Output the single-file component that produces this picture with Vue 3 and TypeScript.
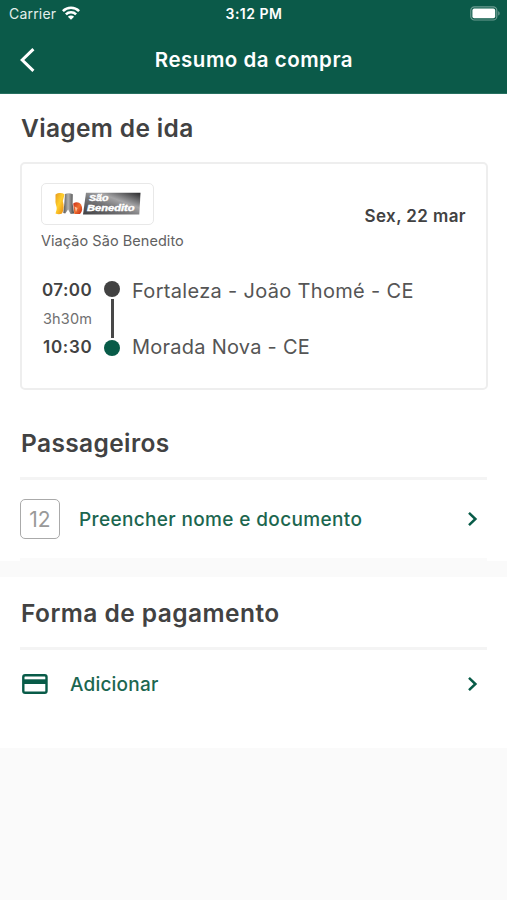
<script setup lang="ts">
interface Stop {
  time: string
  place: string
}

const departure: Stop = { time: '07:00', place: 'Fortaleza - João Thomé - CE' }
const arrival: Stop = { time: '10:30', place: 'Morada Nova - CE' }
const duration = '3h30m'
const seat = 12
</script>

<template>
  <div class="screen">
    <header class="header">
      <div class="status">
        <div class="carrier">
          <span>Carrier</span>
          <svg class="wifi" width="18" height="14" viewBox="0 0 18 14">
            <g fill="none" stroke="#fff" stroke-width="2.6">
              <path d="M0.9 5.1a11.6 11.6 0 0 1 16.2 0" />
              <path d="M3.9 8.4a7.3 7.3 0 0 1 10.2 0" />
            </g>
            <path d="M9 13.8L5.9 10.7a4.3 4.3 0 0 1 6.2 0z" fill="#fff" />
          </svg>
        </div>
        <span class="clock">3:12 PM</span>
        <svg class="battery" width="30" height="15" viewBox="0 0 30 15">
          <rect x="0.8" y="0.8" width="26" height="13.2" rx="3.6" fill="none" stroke="#fff" stroke-opacity=".4" stroke-width="1.2" />
          <rect x="2.4" y="2.6" width="22.8" height="9.6" rx="1.8" fill="#fff" />
          <path d="M28.3 5.2c1.7.6 1.7 3.8 0 4.4z" fill="#fff" fill-opacity=".45" />
        </svg>
      </div>
      <nav class="nav">
        <svg class="back" width="18" height="26" viewBox="0 0 18 26">
          <path d="M14.4 2.1L3.2 13l11.2 10.9" fill="none" stroke="#fff" stroke-width="3" />
        </svg>
        <h1 class="title">Resumo da compra</h1>
      </nav>
    </header>

    <main>
      <section class="trip">
        <h2 class="h-trip">Viagem de ida</h2>
        <article class="card">
          <div class="top">
            <div>
              <div class="logo">
                <svg width="90" height="24" viewBox="0 0 90 24">
                  <defs>
                    <linearGradient id="gold" x1="0" x2="1" y1="0" y2="1">
                      <stop offset="0" stop-color="#e79a20" />
                      <stop offset=".45" stop-color="#ffd02c" />
                      <stop offset="1" stop-color="#e8800e" />
                    </linearGradient>
                    <linearGradient id="steel" x1="0" x2="1">
                      <stop offset="0" stop-color="#555" />
                      <stop offset=".45" stop-color="#b0b0b0" />
                      <stop offset="1" stop-color="#444" />
                    </linearGradient>
                    <linearGradient id="flame" x1="0" x2="1" y1="0" y2="1">
                      <stop offset="0" stop-color="#c92c1a" />
                      <stop offset=".5" stop-color="#f0702f" />
                      <stop offset="1" stop-color="#bf2516" />
                    </linearGradient>
                    <linearGradient id="plate" x1="0" x2="1" y1="1" y2="0">
                      <stop offset="0" stop-color="#3f3f42" />
                      <stop offset=".42" stop-color="#777779" />
                      <stop offset=".64" stop-color="#a5a5a7" />
                      <stop offset="1" stop-color="#29292b" />
                    </linearGradient>
                  </defs>
                  <path d="M1.5 2.5C4.500 .6 8 .8 10.500 2.200L8.800 9c1.300 4 1.200 9-.8 12.500-2 1-4.500 1-6.500 0l1-3.500c1-3-1.500-6-1-9.500z" fill="url(#gold)" />
                  <path d="M11 2c3-1.200 5.500-.8 7.800.3l-.2 9.200 1.500 10-3.500.5-2.500-4.500-2.800 4-2-.5 1-9z" fill="url(#steel)" />
                  <path d="M19.200 11.500c2.500-2 6-1.800 7.800 1 1.800 3.500 1.500 7-1 9.500h-5.700z" fill="url(#flame)" />
                  <path d="M20.500 14.500l3 1.500-1.500 4z" fill="#ffc09a" />
                  <path d="M32 .8H86.500L85.300 22.500H29z" fill="url(#plate)" />
                  <g class="logo-text" fill="#fff">
                    <text x="35" y="8.800" textLength="19.500" lengthAdjust="spacingAndGlyphs">São</text>
                    <text x="33" y="18.800" textLength="47.500" lengthAdjust="spacingAndGlyphs">Benedito</text>
                  </g>
                </svg>
              </div>
              <p class="company">Viação São Benedito</p>
            </div>
            <time class="date">Sex, 22 mar</time>
          </div>
          <div class="route">
            <div class="times">
              <b>{{ departure.time }}</b>
              <span>{{ duration }}</span>
              <b>{{ arrival.time }}</b>
            </div>
            <div class="track">
              <i class="dot"></i>
              <i class="line"></i>
              <i class="dot end"></i>
            </div>
            <div class="places">
              <span class="from">{{ departure.place }}</span>
              <span class="to">{{ arrival.place }}</span>
            </div>
          </div>
        </article>
      </section>

      <section class="passengers">
        <h2 class="h-pass">Passageiros</h2>
        <a class="row row-pass">
          <span class="seat">{{ seat }}</span>
          <span class="label fill">Preencher nome e documento</span>
          <svg class="chevron" width="12" height="16" viewBox="0 0 12 16">
            <path d="M2 1.8L8.4 8 2 14.2" />
          </svg>
        </a>
      </section>

      <section class="payment">
        <h2 class="h-pay">Forma de pagamento</h2>
        <a class="row row-pay">
          <svg class="credit" width="26" height="20" viewBox="0 0 26 20">
            <rect x="1.3" y="1.3" width="23.2" height="17.4" rx="1.8" fill="none" stroke="#085b48" stroke-width="2.4" />
            <path d="M1 5.3h24v4.7H1z" fill="#085b48" />
          </svg>
          <span class="label add">Adicionar</span>
          <svg class="chevron" width="12" height="16" viewBox="0 0 12 16">
            <path d="M2 1.8L8.4 8 2 14.2" />
          </svg>
        </a>
      </section>
    </main>
  </div>
</template>

<style>
body {
  background: #fafafa;
}
</style>

<style scoped>
* {
  box-sizing: border-box;
}
.screen {
  width: 507px;
  height: 900px;
  overflow: hidden;
  background: #fafafa;
  color: #424242;
  font-family: Inter, sans-serif;
}
h1,
h2,
p {
  margin: 0;
}
svg {
  display: block;
  flex: none;
}
span,
b,
time,
h1,
h2,
p {
  white-space: nowrap;
}
.header {
  height: 94px;
  background: #0b5a49;
  color: #fff;
  border-bottom: 1px solid #267060;
}
.status {
  display: grid;
  grid-template-columns: 1fr auto 1fr;
  align-items: center;
  height: 27px;
  padding: 0 7px 0 8px;
}
.carrier {
  display: flex;
  align-items: center;
  gap: 6px;
  padding-left: 1px;
  font-size: 14px;
  letter-spacing: 0.2px;
  color: #e4efec;
}
.wifi {
  margin-top: -2px;
}
.clock {
  font-size: 14px;
  font-weight: 600;
  letter-spacing: 0.5px;
}
.battery {
  justify-self: end;
  margin-top: -1px;
}
.nav {
  display: grid;
  grid-template-columns: 40px 1fr 40px;
  align-items: center;
  height: 66px;
  padding: 0 17px 0 18px;
}
.back {
  margin-left: 1px;
}
.title {
  text-align: center;
  font-size: 20.5px;
  line-height: 24px;
  font-weight: 600;
  letter-spacing: 0.5px;
}
.trip,
.passengers,
.payment {
  background: #fff;
  padding: 0 20px;
}
.trip {
  padding-top: 19px;
}
h2 {
  padding-left: 1px;
  font-size: 24.5px;
  line-height: 31px;
  font-weight: 600;
}
.h-trip {
  letter-spacing: 0.35px;
}
.h-pass {
  letter-spacing: 0.38px;
}
.h-pay {
  letter-spacing: 0.45px;
}
.card {
  width: 468px;
  height: 228px;
  margin-top: 18px;
  padding: 19px 20px;
  border: 2px solid #eee;
  border-radius: 5px;
}
.top {
  display: flex;
  justify-content: space-between;
  height: 66px;
}
.logo {
  width: 113px;
  height: 42px;
  margin-left: -1px;
  padding: 8px 12px;
  border: 1.5px solid #e8e8e8;
  border-radius: 5px;
}
.logo-text {
  font-family: 'Liberation Sans', sans-serif;
  font-size: 8.5px;
  font-weight: 700;
  font-style: italic;
  stroke: #fff;
  stroke-width: 0.4px;
}
.company {
  margin: 7px 0 0 -1px;
  font-size: 14.5px;
  line-height: 18px;
  letter-spacing: 0.05px;
  color: #616161;
}
.date {
  margin-top: 23px;
  font-size: 17px;
  line-height: 21px;
  font-weight: 600;
  letter-spacing: 0.4px;
}
.route {
  display: flex;
  margin-top: 30px;
}
.times {
  display: flex;
  flex-direction: column;
  align-items: flex-start;
  gap: 9px;
  width: 50px;
  padding-top: 1px;
}
.times b {
  font-size: 17px;
  line-height: 20px;
  font-weight: 600;
  letter-spacing: 0.45px;
}
.times b:last-child {
  margin-left: 1px;
  letter-spacing: 0.7px;
}
.times span {
  margin-left: 1px;
  font-size: 14.5px;
  line-height: 19px;
  letter-spacing: 0.15px;
  color: #707070;
}
.track {
  display: flex;
  flex-direction: column;
  align-items: center;
  width: 16px;
  margin-left: 12px;
  padding-top: 2px;
}
.dot {
  width: 16px;
  height: 16px;
  border-radius: 50%;
  background: #424242;
}
.end {
  background: #085b48;
}
.line {
  width: 3px;
  height: 39px;
  margin: 2px 0;
  background: #484848;
}
.places {
  display: flex;
  flex-direction: column;
  gap: 32px;
  margin-left: 12px;
  font-size: 20px;
  line-height: 24px;
  color: #555;
}
.from {
  letter-spacing: 0.32px;
}
.to {
  letter-spacing: 0.25px;
}
.passengers {
  height: 171px;
  padding-top: 38px;
}
.row {
  display: flex;
  align-items: center;
  border-top: 3px solid #f4f4f4;
}
.row-pass {
  height: 103px;
  margin-top: 18px;
  border-bottom: 22px solid #fafafa;
}
.seat {
  display: flex;
  align-items: center;
  justify-content: center;
  width: 40px;
  height: 40px;
  border: 1.5px solid #aaa;
  border-radius: 5px;
  font-size: 21px;
  color: #999;
}
.label {
  padding-top: 2px;
  color: #1c664f;
  font-size: 19px;
  line-height: 24px;
  font-weight: 500;
}
.fill {
  margin-left: 19px;
  letter-spacing: 0.36px;
}
.add {
  margin-left: 22px;
  letter-spacing: 0.2px;
}
.chevron {
  margin-left: auto;
  margin-right: 8px;
}
.chevron path {
  fill: none;
  stroke: #085b48;
  stroke-width: 2.5;
}
.payment {
  height: 171px;
  margin-top: 16px;
  padding-top: 21px;
}
.row-pay {
  height: 71px;
  margin-top: 18px;
}
.credit {
  margin-left: 2px;
}
</style>
